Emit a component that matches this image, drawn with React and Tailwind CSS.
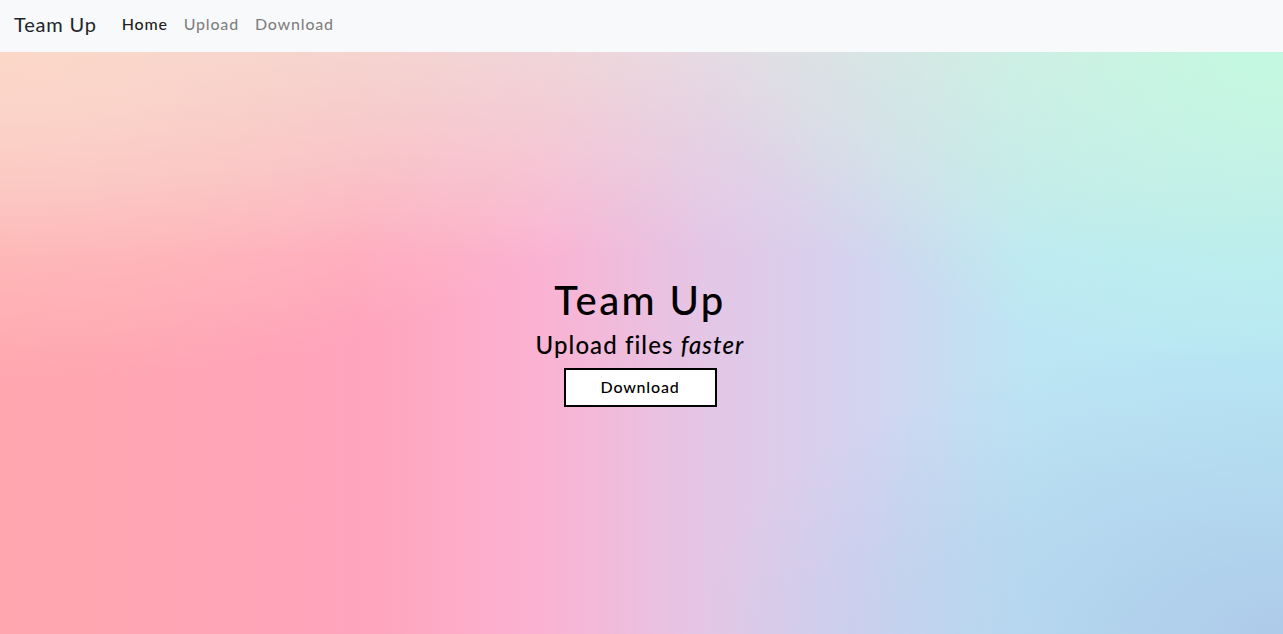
export default function App() {
  return (
    <div className="min-h-screen flex flex-col font-['Lato','Open_Sans',sans-serif] tracking-[0.05em]">
      {/* Navbar */}
      <nav className="h-[52px] bg-[#f8f9fa] flex items-center px-[14px] pb-[4px]">
        <span className="text-[20px] text-[#212529] mr-[25px]">Team Up</span>
        <a className="text-[16px] font-medium text-[rgba(0,0,0,0.9)] mr-[16px]">Home</a>
        <a className="text-[16px] font-medium text-[rgba(0,0,0,0.5)] mr-[16px]">Upload</a>
        <a className="text-[16px] font-medium text-[rgba(0,0,0,0.5)]">Download</a>
      </nav>

      {/* Hero */}
      <main className="h-[582px] flex flex-col items-center justify-center pb-[4px] pr-[3px] text-black bg-[radial-gradient(ellipse_75%_90%_at_top_right,rgba(194,250,224,0.95),transparent_60%),radial-gradient(ellipse_at_top_left,rgba(253,216,200,0.95),transparent_40%),radial-gradient(ellipse_60%_70%_at_bottom_right,rgba(172,198,232,0.85),transparent_75%),linear-gradient(to_bottom,rgba(230,226,226,0.7)_0%,transparent_35%),linear-gradient(to_right,#ffa6ae_0%,#ffa4bc_28%,#fbb2d2_42%,#e4c6e6_55%,#d2d4f0_68%,#bde6f4_80%,#b8e8f4_100%)]">
        <h1 className="text-[40px] leading-[48px] font-medium mb-[6px] tracking-[0.06em]">Team Up</h1>
        <h4 className="text-[24px] leading-[29px] font-medium mb-[9px] tracking-[0.045em]">
          Upload files <em>faster</em>
        </h4>
        <button className="w-[153px] h-[39px] bg-white border-2 border-black text-[16px] font-medium">
          Download
        </button>
      </main>
    </div>
  );
}
